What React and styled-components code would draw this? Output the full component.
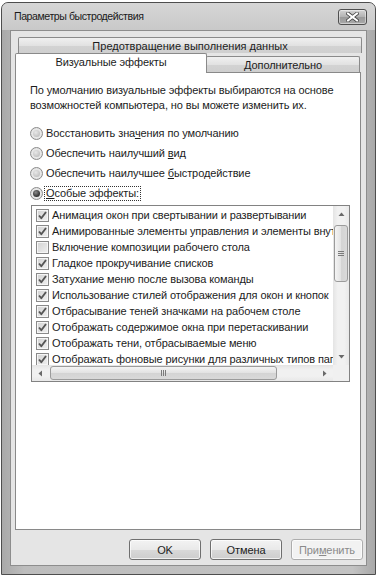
import React from "react";
import styled, { createGlobalStyle } from "styled-components";

const Global = createGlobalStyle`
  html, body { margin: 0; padding: 0; background: #ffffff; }
  body { font-family: "Liberation Sans", Arial, sans-serif; color: #1c1c1c; }
  * { box-sizing: border-box; }
`;

const Window = styled.div`
  margin: 2px 0 0 1px;
  width: 375px;
  height: 573px;
  border: 1px solid #4e4e4e;
  border-radius: 7px 7px 0 0;
  background: linear-gradient(to right, #a9a9a9, #bdbdbd 6%, #c3c3c3 94%, #a8a8a8);
  display: flex;
  flex-direction: column;
  overflow: hidden;
`;

const TitleBar = styled.div`
  height: 27px;
  flex: none;
  display: flex;
  align-items: center;
  justify-content: space-between;
  padding: 0 8px 2px 12px;
  background: linear-gradient(to bottom, #d6d6d6, #c9c9c9);
`;

const Title = styled.span`
  font-size: 10.6px;
  letter-spacing: -0.45px;
  color: #1a1a1a;
`;

const CloseBtn = styled.div`
  width: 29px;
  height: 16px;
  border: 1px solid #4f4f4f;
  border-radius: 3px;
  background: linear-gradient(to bottom, #d4d4d4, #b2b2b2 50%, #9a9a9a 51%, #a9a9a9);
  box-shadow: inset 0 0 0 1px rgba(255,255,255,0.45);
  display: flex;
  align-items: center;
  justify-content: center;
  margin-top: 2px;
`;

const Client = styled.div`
  flex: 1;
  margin: 0 8px 8px 8px;
  border: 1px solid #8d8d8d;
  background: #e5e5e5;
  display: flex;
  flex-direction: column;
  padding: 6px 5px 5px 4px;
  font-size: 11px;
  letter-spacing: -0.1px;
`;

const BackRow = styled.div`
  height: 16px;
  margin: 0 -1px 0 3px;
  border: 1px solid #8a8a8a;
  border-bottom: none;
  border-radius: 2px 2px 0 0;
  background: linear-gradient(to bottom, #f0f0f0, #e2e2e2 50%, #d3d3d3 51%, #cfcfcf);
  display: flex;
  align-items: center;
  justify-content: center;
  letter-spacing: 0;
`;

const FrontRow = styled.div`
  display: flex;
  align-items: flex-end;
  height: 19px;
`;

const Tab = styled.div`
  width: ${(p) => p.$w}px;
  height: ${(p) => (p.$active ? 20 : 16)}px;
  margin-bottom: ${(p) => (p.$active ? -1 : 0)}px;
  margin-left: ${(p) => (p.$active ? 0 : -1)}px;
  position: relative;
  z-index: ${(p) => (p.$active ? 2 : 1)};
  border: 1px solid #8a8a8a;
  border-bottom: none;
  border-radius: 2px 2px 0 0;
  background: ${(p) =>
    p.$active
      ? "#ffffff"
      : "linear-gradient(to bottom, #f0f0f0, #e2e2e2 50%, #d3d3d3 51%, #cfcfcf)"};
  display: flex;
  align-items: ${(p) => (p.$active ? "flex-start" : "center")};
  padding-top: ${(p) => (p.$active ? 2 : 0)}px;
  justify-content: center;
`;

const Panel = styled.div`
  flex: 1;
  background: #ffffff;
  border: 1px solid #898989;
  padding: 10px 13px 0 14px;
  display: flex;
  flex-direction: column;
`;

const Description = styled.p`
  margin: 0;
  line-height: 15px;
  white-space: nowrap;
`;

const RadioGroup = styled.div`
  margin-top: 10px;
  display: flex;
  flex-direction: column;
`;

const RadioRow = styled.div`
  height: 20px;
  display: flex;
  align-items: center;
  gap: 1px;
`;

const RadioCircle = styled.span`
  width: 13px;
  height: 13px;
  border-radius: 50%;
  border: 1px solid #8b8b8b;
  background: radial-gradient(circle at 50% 50%, #f4f4f4 0%, #e6e6e6 60%, #d6d6d6 100%);
  display: flex;
  align-items: center;
  justify-content: center;
  flex: none;
  &::after {
    content: "";
    width: 7px;
    height: 7px;
    border-radius: 50%;
    background: ${(p) =>
      p.$checked
        ? "radial-gradient(circle at 40% 35%, #8c8c8c 0%, #3c3c3c 60%, #222 100%)"
        : "radial-gradient(circle at 40% 35%, #e8e8e8 0%, #c4c4c4 70%, #b2b2b2 100%)"};
  }
`;

const Label = styled.span`
  padding: 0 1px;
  border: 1px dotted ${(p) => (p.$focus ? "#333" : "transparent")};
  line-height: 13px;
`;

const Key = styled.span`
  text-decoration: underline;
`;

const ListBox = styled.div`
  margin: 2px 0 0 1px;
  width: 319px;
  height: 177px;
  border: 1px solid #828282;
  display: grid;
  grid-template-columns: minmax(0, 1fr) 16px;
  grid-template-rows: minmax(0, 1fr) 16px;
  background: #ffffff;
  overflow: hidden;
`;

const Items = styled.div`
  overflow: hidden;
  min-width: 0;
  padding: 1px 0 0 4px;
`;

const Item = styled.div`
  height: 16px;
  display: flex;
  align-items: center;
  gap: 3px;
  white-space: nowrap;
`;

const Check = styled.span`
  width: 13px;
  height: 13px;
  flex: none;
  border: 1px solid #8a8a8a;
  background: linear-gradient(135deg, #d2d2d2, #f0f0f0);
  box-shadow: inset 0 0 0 1px #f6f6f6;
  display: flex;
  align-items: center;
  justify-content: center;
`;

const VScroll = styled.div`
  background: linear-gradient(to right, #e4e4e4, #f1f1f1 30%, #f1f1f1 70%, #e8e8e8);
  display: flex;
  flex-direction: column;
`;

const HScroll = styled.div`
  min-width: 0;
  background: linear-gradient(to bottom, #e4e4e4, #f1f1f1 30%, #f1f1f1 70%, #e8e8e8);
  display: flex;
`;

const Corner = styled.div`
  background: #f0f0f0;
`;

const Arrow = styled.div`
  flex: none;
  width: ${(p) => (p.$horizontal ? 17 : 16)}px;
  height: ${(p) => (p.$horizontal ? 16 : 17)}px;
  display: flex;
  align-items: center;
  justify-content: center;
`;

const Spacer = styled.div`
  flex: 1;
`;

const VThumb = styled.div`
  flex: none;
  margin: 2px 1px 0 1px;
  height: 57px;
  border: 1px solid #9b9b9b;
  border-radius: 3px;
  background: linear-gradient(to right, #f4f4f4, #e2e2e2 50%, #d4d4d4 51%, #d9d9d9);
  display: flex;
  flex-direction: column;
  align-items: center;
  justify-content: center;
  gap: 1px;
`;

const HThumb = styled.div`
  flex: none;
  margin: 1px 0 1px 1px;
  width: 227px;
  border: 1px solid #9b9b9b;
  border-radius: 3px;
  background: linear-gradient(to bottom, #f4f4f4, #e2e2e2 50%, #d4d4d4 51%, #d9d9d9);
  display: flex;
  align-items: center;
  justify-content: center;
  gap: 1px;
`;

const Grip = styled.span`
  background: #7a7a7a;
  width: ${(p) => (p.$vertical ? "1px" : "6px")};
  height: ${(p) => (p.$vertical ? "6px" : "1px")};
`;

const ButtonRow = styled.div`
  margin-top: 9px;
  height: 21px;
  display: flex;
  justify-content: flex-end;
  gap: 9px;
  margin-right: -2px;
`;

const Button = styled.div`
  width: 72px;
  height: 21px;
  border: 1px solid ${(p) => (p.$disabled ? "#adadad" : "#6f6f6f")};
  border-radius: 3px;
  background: ${(p) =>
    p.$disabled
      ? "#f2f2f2"
      : "linear-gradient(to bottom, #f3f3f3, #e9e9e9 50%, #d9d9d9 51%, #cdcdcd)"};
  box-shadow: inset 0 0 0 1px rgba(255,255,255,0.7);
  color: ${(p) => (p.$disabled ? "#8a8a8a" : "#1c1c1c")};
  display: flex;
  align-items: center;
  justify-content: center;
`;

const CheckMark = () => (
  <svg width="11" height="11" viewBox="0 0 11 11">
    <path d="M2 5.5 L4.3 8.2 L9 2" fill="none" stroke="#555" strokeWidth="1.9" strokeLinejoin="round" />
  </svg>
);

const Tri = ({ dir }) => {
  const d = {
    up: "M0.5 5 L3.5 1.5 L6.5 5 Z",
    down: "M0.5 2 L3.5 5.5 L6.5 2 Z",
    left: "M5 0.5 L1.5 3.5 L5 6.5 Z",
    right: "M2 0.5 L5.5 3.5 L2 6.5 Z",
  }[dir];
  return (
    <svg width="7" height="7" viewBox="0 0 7 7">
      <path d={d} fill="#6a6a6a" />
    </svg>
  );
};

const items = [
  ["Анимация окон при свертывании и развертывании", true],
  ["Анимированные элементы управления и элементы внутри окна", true],
  ["Включение композиции рабочего стола", false],
  ["Гладкое прокручивание списков", true],
  ["Затухание меню после вызова команды", true],
  ["Использование стилей отображения для окон и кнопок", true],
  ["Отбрасывание теней значками на рабочем столе", true],
  ["Отображать содержимое окна при перетаскивании", true],
  ["Отображать тени, отбрасываемые меню", true],
  ["Отображать фоновые рисунки для различных типов папок", true],
];

export default function App() {
  return (
    <>
      <Global />
      <Window>
        <TitleBar>
          <Title>Параметры быстродействия</Title>
          <CloseBtn>
            <svg width="13" height="10" viewBox="0 0 13 10">
              <path d="M2 1.5 L11 8.5 M11 1.5 L2 8.5" stroke="#444" strokeWidth="3.6" strokeLinecap="square" />
              <path d="M2 1.5 L11 8.5 M11 1.5 L2 8.5" stroke="#fff" strokeWidth="2" strokeLinecap="square" />
            </svg>
          </CloseBtn>
        </TitleBar>
        <Client>
          <BackRow>Предотвращение выполнения данных</BackRow>
          <FrontRow>
            <Tab $active $w={192}>Визуальные эффекты</Tab>
            <Tab $w={154}>Дополнительно</Tab>
          </FrontRow>
          <Panel>
            <Description>
              По умолчанию визуальные эффекты выбираются на основе
              <br />
              возможностей компьютера, но вы можете изменить их.
            </Description>
            <RadioGroup>
              <RadioRow>
                <RadioCircle />
                <Label>Восстановить зна<Key>ч</Key>ения по умолчанию</Label>
              </RadioRow>
              <RadioRow>
                <RadioCircle />
                <Label>Обеспечить наилучший <Key>в</Key>ид</Label>
              </RadioRow>
              <RadioRow>
                <RadioCircle />
                <Label>Обеспечить наилучшее <Key>б</Key>ыстродействие</Label>
              </RadioRow>
              <RadioRow>
                <RadioCircle $checked />
                <Label $focus><Key>О</Key>собые эффекты:</Label>
              </RadioRow>
            </RadioGroup>
            <ListBox>
              <Items>
                {items.map(([text, on]) => (
                  <Item key={text}>
                    <Check>{on && <CheckMark />}</Check>
                    <span>{text}</span>
                  </Item>
                ))}
              </Items>
              <VScroll>
                <Arrow><Tri dir="up" /></Arrow>
                <VThumb>
                  <Grip />
                  <Grip />
                  <Grip />
                </VThumb>
                <Spacer />
                <Arrow><Tri dir="down" /></Arrow>
              </VScroll>
              <HScroll>
                <Arrow $horizontal><Tri dir="left" /></Arrow>
                <HThumb>
                  <Grip $vertical />
                  <Grip $vertical />
                  <Grip $vertical />
                </HThumb>
                <Spacer />
                <Arrow $horizontal><Tri dir="right" /></Arrow>
              </HScroll>
              <Corner />
            </ListBox>
          </Panel>
          <ButtonRow>
            <Button>OK</Button>
            <Button>Отмена</Button>
            <Button $disabled>При<Key>м</Key>енить</Button>
          </ButtonRow>
        </Client>
      </Window>
    </>
  );
}
